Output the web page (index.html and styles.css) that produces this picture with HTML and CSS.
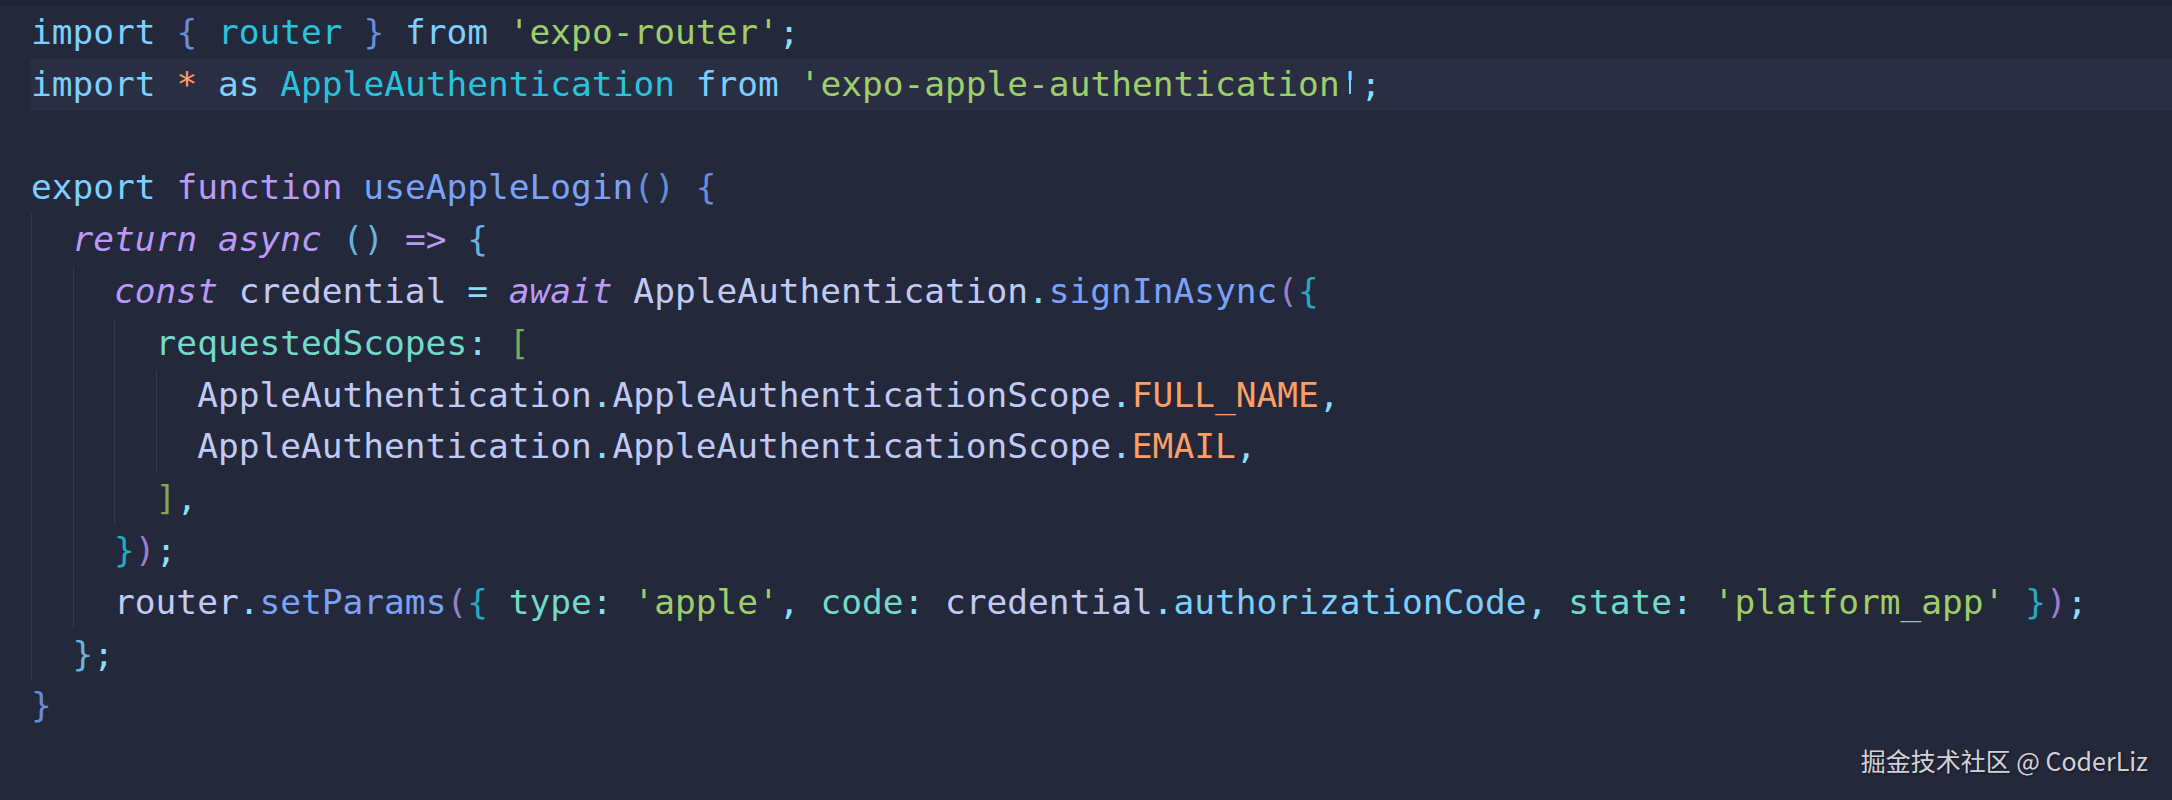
FILE: index.html
```html
<!DOCTYPE html>
<html lang="en">

<head>
    <meta charset="UTF-8">
    <meta name="viewport" content="width=device-width, initial-scale=1.0">
    <title>useAppleLogin.ts</title>
    <link rel="stylesheet" href="styles.css">
</head>

<body>
    <div class="topbar"></div>

    <div class="editor">
        <div class="line"><span class="code"><span class="kw">import</span> <span class="b1">{</span> <span class="ns">router</span> <span class="b1">}</span> <span class="kw">from</span> <span class="str">'expo-router'</span><span class="pn">;</span></span></div>
        <div class="line current"><span class="code"><span class="kw">import</span> <span class="cn">*</span> <span class="kw">as</span> <span class="ns">AppleAuthentication</span> <span class="kw">from</span> <span class="str">'expo-apple-authentication<span class="caret">'</span></span><span class="pn">;</span></span></div>
        <div class="line"><span class="code"> </span></div>
        <div class="line"><span class="code"><span class="kw">export</span> <span class="st">function</span> <span class="fn">useAppleLogin</span><span class="b1">()</span> <span class="b1">{</span></span></div>
        <div class="line"><span class="ind"></span><span class="code"><span class="st it">return</span> <span class="st it">async</span> <span class="b2">()</span> <span class="st">=&gt;</span> <span class="b2">{</span></span></div>
        <div class="line"><span class="ind"></span><span class="ind"></span><span class="code"><span class="st it">const</span> credential <span class="pn">=</span> <span class="st it">await</span> AppleAuthentication<span class="pn">.</span><span class="fn">signInAsync</span><span class="b3">(</span><span class="b4">{</span></span></div>
        <div class="line"><span class="ind"></span><span class="ind"></span><span class="ind"></span><span class="code"><span class="key">requestedScopes</span><span class="pn">:</span> <span class="b5">[</span></span></div>
        <div class="line"><span class="ind"></span><span class="ind"></span><span class="ind"></span><span class="ind"></span><span class="code">AppleAuthentication<span class="pn">.</span>AppleAuthenticationScope<span class="pn">.</span><span class="cn">FULL_NAME</span><span class="pn">,</span></span></div>
        <div class="line"><span class="ind"></span><span class="ind"></span><span class="ind"></span><span class="ind"></span><span class="code">AppleAuthentication<span class="pn">.</span>AppleAuthenticationScope<span class="pn">.</span><span class="cn">EMAIL</span><span class="pn">,</span></span></div>
        <div class="line"><span class="ind"></span><span class="ind"></span><span class="ind"></span><span class="code"><span class="b5">]</span><span class="pn">,</span></span></div>
        <div class="line"><span class="ind"></span><span class="ind"></span><span class="code"><span class="b4">}</span><span class="b3">)</span><span class="pn">;</span></span></div>
        <div class="line"><span class="ind"></span><span class="ind"></span><span class="code">router<span class="pn">.</span><span class="fn">setParams</span><span class="b3">(</span><span class="b4">{</span> <span class="key">type</span><span class="pn">:</span> <span class="str">'apple'</span><span class="pn">,</span> <span class="key">code</span><span class="pn">:</span> credential<span class="pn">.</span><span class="prop">authorizationCode</span><span class="pn">,</span> <span class="key">state</span><span class="pn">:</span> <span class="str">'platform_app'</span> <span class="b4">}</span><span class="b3">)</span><span class="pn">;</span></span></div>
        <div class="line"><span class="ind"></span><span class="code"><span class="b2">}</span><span class="pn">;</span></span></div>
        <div class="line"><span class="code"><span class="b1">}</span></span></div>
    </div>

    <div class="watermark">掘金技术社区 @ CoderLiz</div>
</body>

</html>
```

FILE: styles.css
```css
body, html {
    margin: 0;
    padding: 0;
    height: 100%;
    background-color: #24283b; /* tokyo night storm */
    color: #c0caf5;
    overflow: hidden;
}

body {
    position: relative;
}

.topbar {
    height: 6px;
    background-color: #1f2335;
}

.editor {
    padding-top: 1px;
    padding-left: 30px;
    font-family: "DejaVu Sans Mono", monospace;
    font-size: 34.5px;
}

.line {
    display: flex;
    height: 51.8px;
    padding-left: 1px;
}

.line.current {
    background-color: #292e42;
}

.code {
    line-height: 51.8px;
    white-space: pre;
}

/* indent guides */
.ind {
    width: 2ch;
    flex: none;
    box-sizing: border-box;
    border-left: 1px solid #33394f;
}

/* syntax colours */
.kw { color: #7dcfff; }
.st { color: #bb9af7; }
.it { font-style: italic; }
.fn { color: #7aa2f7; }
.str { color: #9ece6a; }
.key { color: #73daca; }
.pn { color: #89ddff; }
.cn { color: #ff9e64; }
.ns { color: #2ac3de; }
.prop { color: #7dcfff; }

/* bracket pair colours */
.b1 { color: #698cd6; }
.b2 { color: #68b3de; }
.b3 { color: #9a7ecc; }
.b4 { color: #25aac2; }
.b5 { color: #80a856; }

/* cursor sits on the closing quote */
.caret {
    position: relative;
    color: #7dcfff;
}

.caret:after {
    content: "";
    position: absolute;
    left: 45%;
    top: 10px;
    bottom: 10px;
    width: 2px;
    background-color: #7dcfff;
}

.watermark {
    position: absolute;
    right: 24px;
    bottom: 22px;
    font-family: "Noto Sans CJK SC", "Noto Sans", sans-serif;
    font-size: 25px;
    color: rgba(235, 235, 240, 0.9);
    text-shadow: 1px 1px 2px rgba(0, 0, 0, 0.5);
}
```
